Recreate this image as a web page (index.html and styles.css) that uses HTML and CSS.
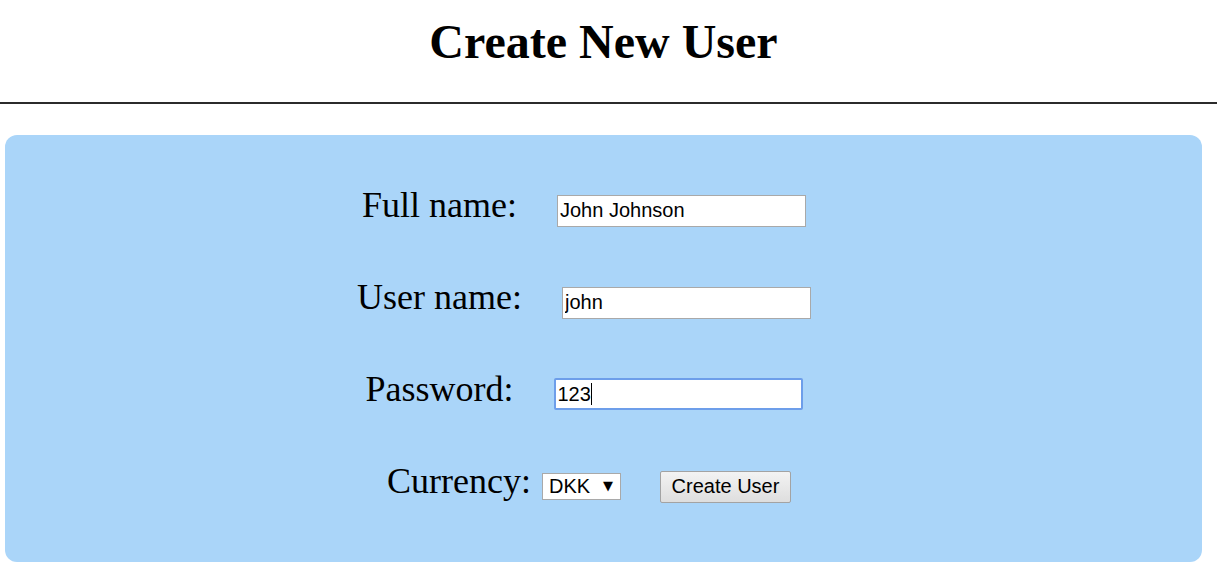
FILE: index.html
```html
<!DOCTYPE html>
<html>
<head>
<meta charset="utf-8">
<link rel="stylesheet" href="styles.css">
</head>
<body>
<header class="top">
  <h1 class="title">Create New User</h1>
</header>
<hr class="rule">
<main class="panel">
  <form class="form">
    <div class="row">
      <label class="label">Full name:</label>
      <input class="field" type="text" value="John Johnson">
    </div>
    <div class="row">
      <label class="label">User name:</label>
      <input class="field" type="text" value="john">
    </div>
    <div class="row">
      <label class="label">Password:</label>
      <span class="field focused">123<span class="caret"></span></span>
    </div>
    <div class="row currency-row">
      <label class="label">Currency:</label>
      <span class="select-wrap">
        <select class="select"><option>DKK</option></select>
        <span class="arrow">▼</span>
      </span>
      <button class="btn" type="button">Create User</button>
    </div>
  </form>
</main>
</body>
</html>
```
FILE: styles.css
```css
html, body {
  margin: 0;
  padding: 0;
  background: #fff;
}
body {
  font-family: "Liberation Serif", "Times New Roman", serif;
  color: #000;
  width: 1217px;
  height: 562px;
  overflow: hidden;
}
.top {
  width: 1207px;
  text-align: center;
  padding-top: 14px;
}
.title {
  margin: 0;
  font-size: 48px;
  font-weight: bold;
  line-height: 56px;
}
.rule {
  margin: 32px 0 0 0;
  border: 0;
  height: 2px;
  background: #2b2b2b;
}
.panel {
  margin: 31px 0 0 5px;
  width: 1197px;
  height: 427px;
  background: #aad5f9;
  border-radius: 12px;
  box-sizing: border-box;
  padding-top: 49px;
}
.form {
  display: flex;
  flex-direction: column;
  align-items: center;
  gap: 60px;
  padding-right: 39px;
}
.row {
  display: flex;
  align-items: baseline;
  gap: 40px;
  height: 32px;
}
.label {
  font-size: 36px;
  font-family: "Liberation Serif", "Times New Roman", serif;
}
.field {
  box-sizing: border-box;
  width: 249px;
  height: 32px;
  border: 1px solid #a9a9a9;
  background: #fff;
  font-family: "Liberation Sans", Arial, sans-serif;
  font-size: 20px;
  padding: 0 2px;
  color: #000;
  outline: none;
  margin: 0;
}
.focused {
  display: inline-flex;
  align-items: center;
  border: 2px solid #6d9eea;
  border-radius: 2px;
  padding: 0 2px;
  line-height: 28px;
}
.caret {
  display: inline-block;
  width: 1px;
  height: 22px;
  background: #000;
}
.currency-row {
  gap: 0;
  margin-left: 10px;
}
.select-wrap {
  position: relative;
  margin-left: 11px;
  display: inline-block;
}
.select {
  -webkit-appearance: none;
  appearance: none;
  box-sizing: border-box;
  width: 79px;
  height: 27px;
  border: 1px solid #a9a9a9;
  border-radius: 0;
  background: #fff;
  font-family: "Liberation Sans", Arial, sans-serif;
  font-size: 20px;
  padding: 0 0 0 6px;
  color: #000;
  margin: 0;
}
.arrow {
  position: absolute;
  right: 8px;
  top: 5px;
  font-size: 13px;
  font-family: "DejaVu Sans", sans-serif;
  pointer-events: none;
}
.btn {
  margin-left: 39px;
  box-sizing: border-box;
  width: 131px;
  height: 32px;
  border: 1px solid #a3a3a3;
  border-radius: 2px;
  background: linear-gradient(#f3f3f3, #dedede);
  font-family: "Liberation Sans", Arial, sans-serif;
  font-size: 20px;
  color: #000;
  padding: 0;
}
```
